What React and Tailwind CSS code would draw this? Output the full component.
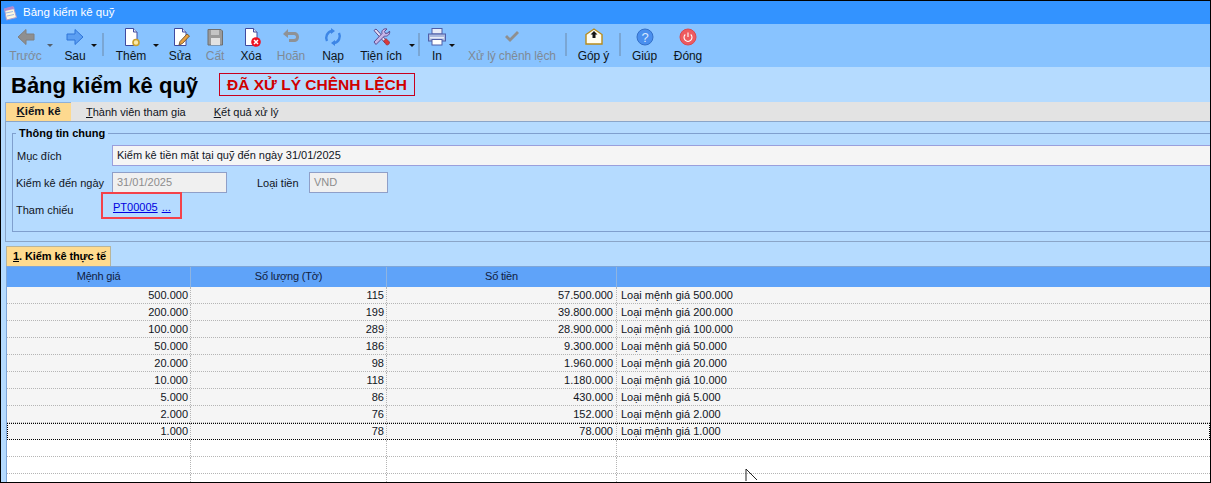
import React from 'react';

const rows = [
  ['500.000', '115', '57.500.000', 'Loại mệnh giá 500.000'],
  ['200.000', '199', '39.800.000', 'Loại mệnh giá 200.000'],
  ['100.000', '289', '28.900.000', 'Loại mệnh giá 100.000'],
  ['50.000', '186', '9.300.000', 'Loại mệnh giá 50.000'],
  ['20.000', '98', '1.960.000', 'Loại mệnh giá 20.000'],
  ['10.000', '118', '1.180.000', 'Loại mệnh giá 10.000'],
  ['5.000', '86', '430.000', 'Loại mệnh giá 5.000'],
  ['2.000', '76', '152.000', 'Loại mệnh giá 2.000'],
  ['1.000', '78', '78.000', 'Loại mệnh giá 1.000'],
];

const Page = ({ children }) => (
  <>
    <path d="M4.500 1.500h8l3.500 3.500v13.500h-11.500z" fill="#fff" stroke="#3f4aa0" />
    <path d="M12.500 1.500v3.500h3.500" fill="#dfe6f5" stroke="#3f4aa0" />
    {children}
  </>
);

const icons = {
  back: <path d="M2 10l8-7.500v4.500h8v6h-8v4.500z" fill="#8f8f8f" stroke="#808080" />,
  forward: <path d="M18 10l-8-7.500v4.500H2v6h8v4.500z" fill="#5c9ff2" stroke="#2f74d8" />,
  add: <Page><circle cx="15" cy="15.500" r="3" fill="#fbe9a8" stroke="#c9a02c" strokeWidth="1.600" /></Page>,
  edit: <Page><path d="M9 18l1-3.500 7-7.500 2.500 2-7 7.500z" fill="#e9a13f" stroke="#7a5c36" /></Page>,
  save: (
    <>
      <path d="M3 2.500h13l1.500 1.500v14H3z" fill="#9a9a9a" stroke="#6f6f6f" />
      <rect x="6" y="3" width="8" height="5" fill="#c4c4c4" />
      <rect x="6" y="11" width="9" height="7" fill="#e2e2e2" />
    </>
  ),
  del: (
    <Page>
      <circle cx="15" cy="15" r="4.800" fill="#ee1122" />
      <path d="M13 13l4 4m0-4l-4 4" stroke="#fff" strokeWidth="1.500" />
    </Page>
  ),
  undo: <path d="M2 7l5-5v3h6c3 0 5 2 5 5s-2 5-5 5H8v-3h5c1.500 0 2-1 2-2s-.5-2-2-2H7v3z" fill="#8f9296" />,
  reload: (
    <g fill="none" stroke="#3d86e6" strokeWidth="2.400">
      <path d="M4 14c-2-4 0-9 5-10" />
      <path d="M16 6c2 4 0 9-5 10" />
      <path d="M8 1v6l4-3zM12 13v6l-4-3z" fill="#3d86e6" stroke="none" />
    </g>
  ),
  tools: (
    <>
      <path d="M3 3.500l2-1.500 11 12-2 2z" fill="#e8e2f6" stroke="#5c4a90" />
      <path d="M3 15l8-8.500c-1-3 2-5.500 5-4.500l-2.500 2.500 1 2 2.500-.5 1.500-2c1 3-2 6-5 5L5 17.500z" fill="#c6b6e8" stroke="#5c4a90" />
      <path d="M12.500 14l2.500-2.500 3.500 3.500c.5 1.500-1.500 3.500-3 3z" fill="#d83a3a" stroke="#8a2a3a" strokeWidth=".6" />
    </>
  ),
  print: (
    <>
      <rect x="5" y="1.500" width="10" height="5.500" fill="#e8ecf8" stroke="#4f5ea8" />
      <rect x="1.500" y="7" width="17" height="7" fill="#a9b8de" stroke="#4f5ea8" />
      <rect x="3" y="10" width="14" height="1.500" fill="#e8ecf8" />
      <rect x="5" y="12.500" width="10" height="5.500" fill="#fff" stroke="#4f5ea8" />
    </>
  ),
  check: <path d="M3 10l2-2 3 3 7-7 2 2-9 9z" fill="#8f8f8f" />,
  feedback: (
    <>
      <path d="M2 7.500l8-5.500 8 5.500v9.500H2z" fill="#fffdf2" stroke="#b88c1c" strokeWidth="1.400" />
      <path d="M10 4l3.500 3.500h-2v3.500h-3V7.500h-2z" fill="#151515" />
    </>
  ),
  help: (
    <>
      <circle cx="10" cy="10" r="8" fill="#4a8fee" stroke="#3470c8" />
      <text x="10" y="14.500" textAnchor="middle" fontSize="13" fill="#d8e8ff" fontFamily="'Liberation Sans', sans-serif">?</text>
    </>
  ),
  power: (
    <>
      <circle cx="10" cy="10" r="8" fill="#ee5a5f" stroke="#d94a50" />
      <path d="M7.300 7.500a4 4 0 1 0 5.400 0M10 5.500v4.500" fill="none" stroke="#fff" strokeWidth="1.100" />
    </>
  ),
};

const tools = [
  { w: 49, label: 'Trước', icon: 'back', off: true, caret: 46, caretColor: 'border-t-[#55606c]' },
  { w: 50, label: 'Sau', icon: 'forward', caret: 41 },
  { sep: true, w: 5 },
  { w: 52, label: 'Thêm', icon: 'add', caret: 48 },
  { w: 46, label: 'Sửa', icon: 'edit' },
  { w: 24, label: 'Cất', icon: 'save', off: true },
  { w: 48, label: 'Xóa', icon: 'del' },
  { w: 32, label: 'Hoãn', icon: 'undo', off: true },
  { w: 52, label: 'Nạp', icon: 'reload' },
  { w: 44, label: 'Tiện ích', icon: 'tools', caret: 50 },
  { gap: true, w: 14 },
  { sep: true, w: 4 },
  { w: 32, label: 'In', icon: 'print', caret: 28 },
  { gap: true, w: 13 },
  { w: 92, label: 'Xử lý chênh lệch', icon: 'check', off: true },
  { gap: true, w: 6 },
  { sep: true, w: 4 },
  { gap: true, w: 1 },
  { w: 49, label: 'Góp ý', icon: 'feedback' },
  { sep: true, w: 4 },
  { w: 45, label: 'Giúp', icon: 'help' },
  { w: 42, label: 'Đóng', icon: 'power' },
];

const ToolItem = ({ item }) => {
  if (item.gap) return <div style={{ width: item.w }} />;
  if (item.sep) {
    return (
      <div className="flex justify-center items-start pt-[9px]" style={{ width: item.w }}>
        <div className="w-[2px] h-[23px] bg-[#7aa6d4]" />
      </div>
    );
  }
  return (
    <div className="relative flex flex-col items-center shrink-0" style={{ width: item.w }}>
      <svg width="20" height="20" viewBox="0 0 20 20" className="mt-[3px]">
        {icons[item.icon]}
      </svg>
      <span className={`mt-[2px] text-[12px] leading-[15px] tracking-[-0.1px] whitespace-nowrap ${item.off ? 'text-[#7f8a96]' : 'text-[#0d1520]'}`}>
        {item.label}
      </span>
      {item.caret && (
        <span
          className={`absolute top-[20px] w-0 h-0 border-x-[3px] border-x-transparent border-t-[3px] ${item.caretColor || 'border-t-[#111]'}`}
          style={{ left: item.caret }}
        />
      )}
    </div>
  );
};

export default function App() {
  return (
    <div className="w-[1211px] h-[483px] overflow-hidden flex flex-col bg-[#b5dbff] border-x border-t border-b border-black text-[11px] text-[#10141c] font-['Liberation_Sans',sans-serif]">
      <div className="h-[23px] shrink-0 bg-[#3393ff] flex items-center pl-[2px] gap-[6px] text-white">
        <svg width="14" height="16" viewBox="0 0 14 16">
          <path d="M1.500 4l9-2 3 10.500-10 2.500z" fill="#fbf6e0" stroke="#a79ad0" />
          <path d="M1 3.500l9-2.500 1 3-9 2z" fill="#b08ad0" />
          <path d="M3 8l7-1.500M4 11l7-1.500" stroke="#9fb8e0" />
        </svg>
        <span className="text-[11.500px]">Bảng kiểm kê quỹ</span>
      </div>

      <div className="h-[43px] shrink-0 bg-[#88c3ff] flex">
        {tools.map((item, i) => (
          <ToolItem key={i} item={item} />
        ))}
      </div>

      <div className="h-[35px] shrink-0 flex items-center pl-[10px]">
        <h1 className="text-[22px] leading-none font-bold text-black w-[208px] pt-[2px]">Bảng kiểm kê quỹ</h1>
        <div className="w-[196px] h-[23px] border border-[#c8001e] flex items-center justify-center text-[15.500px] font-bold text-[#d00000] whitespace-nowrap">
          ĐÃ XỬ LÝ CHÊNH LỆCH
        </div>
      </div>

      <div className="h-[20px] shrink-0 ml-[4px] bg-[#e3e3e3] border-b border-[#8aa5c8] flex">
        <div className="w-[66px] bg-[#fdd98f] border-l border-t border-[#8fb0d8] flex items-center justify-center font-bold text-[11.500px]">
          <span><u>K</u>iểm kê</span>
        </div>
        <div className="ml-[15px] pt-[1px] flex items-center"><span><u>T</u>hành viên tham gia</span></div>
        <div className="ml-[28px] pt-[1px] flex items-center"><span><u>K</u>ết quả xử lý</span></div>
      </div>

      <div className="h-[120px] shrink-0 ml-[4px] border-l border-b border-[#8aa5c8] pl-[6px] pt-[5px]">
        <fieldset className="h-[105px] border-l border-t border-b border-[#7f9fce] pl-[4px]">
          <legend className="-ml-[1px] px-[3px] font-bold text-[11px] leading-[13px] text-black">Thông tin chung</legend>
          <div className="flex items-center h-[21px] mt-[5px]">
            <span className="w-[95px] pt-[1px]">Mục đích</span>
            <div className="flex-1 h-[21px] bg-[#f5f5f5] border-y border-l border-[#9a9fdc] pl-[4px] flex items-center">
              Kiểm kê tiền mặt tại quỹ đến ngày 31/01/2025
            </div>
          </div>
          <div className="flex items-center h-[21px] mt-[6px]">
            <span className="w-[96px] -ml-[1px] pt-[1px] whitespace-nowrap">Kiểm kê đến ngày</span>
            <div className="w-[115px] h-[21px] bg-[#f0f0f0] border border-[#8f9fc8] pl-[4px] flex items-center text-[#8d8d8d]">31/01/2025</div>
            <span className="ml-[30px] w-[52px] pt-[1px] whitespace-nowrap">Loại tiền</span>
            <div className="w-[79px] h-[21px] bg-[#f0f0f0] border border-[#8f9fc8] pl-[4px] flex items-center text-[#8d8d8d]">VND</div>
          </div>
          <div className="flex items-center h-[27px] -mt-[1px]">
            <span className="w-[85px] -ml-[1px] pt-[9px]">Tham chiếu</span>
            <div className="w-[81px] h-[27px] border-2 border-[#f4424a] pl-[10px] pt-[4px] flex items-center gap-[4px] text-[#0000e0] underline">
              <span>PT00005</span>
              <span>...</span>
            </div>
          </div>
        </fieldset>
      </div>

      <div className="flex-1 min-h-0 overflow-hidden relative flex flex-col pl-[5px] pt-[4px]">
        <div className="w-[105px] h-[20px] shrink-0 bg-[#ffdb8f] border border-[#b9b59a] border-b-0 flex items-center pl-[6px] font-bold text-[11px] tracking-[-0.1px] text-black whitespace-nowrap">
          <span><u>1</u>. Kiểm kê thực tế</span>
        </div>
        <div className="flex h-[21px] bg-[#5fa3f9] text-[#102040] tracking-[-0.2px] border-t border-l border-[#7fa6d8] shrink-0">
          <div className="w-[184px] text-center leading-[19px] border-r border-[#8fb4e0]">Mệnh giá</div>
          <div className="w-[196px] text-center leading-[19px] border-r border-[#8fb4e0]">Số lượng (Tờ)</div>
          <div className="w-[230px] text-center leading-[19px] border-r border-[#8fb4e0]">Số tiền</div>
        </div>
        <div className="flex-1 min-h-0 bg-white border-l border-[#7fa6d8]">
          {rows.map((r, i) => {
            const selected = i === rows.length - 1;
            return (
              <div
                key={r[0]}
                className={`flex h-[17px] leading-[16px] bg-[#f5f5f5] border-b border-dotted ${selected ? 'border-black outline-1 outline-dotted outline-black -outline-offset-1' : 'border-[#b5b5b5]'}`}
              >
                <div className="w-[184px] text-right pr-[2px] border-r border-dotted border-[#b5b5b5]">{r[0]}</div>
                <div className="w-[196px] text-right pr-[2px] border-r border-dotted border-[#b5b5b5]">{r[1]}</div>
                <div className="w-[230px] text-right pr-[3px] border-r border-dotted border-[#b5b5b5]">{r[2]}</div>
                <div className="pl-[4px]">{r[3]}</div>
              </div>
            );
          })}
          {[0, 1, 2].map((i) => (
            <div key={i} className="flex h-[17px] bg-white border-b border-dotted border-[#b5b5b5]">
              <div className="w-[184px] border-r border-dotted border-[#b5b5b5]" />
              <div className="w-[196px] border-r border-dotted border-[#b5b5b5]" />
              <div className="w-[230px] border-r border-dotted border-[#b5b5b5]" />
            </div>
          ))}
        </div>
        <svg width="14" height="14" viewBox="0 0 14 14" className="absolute left-[744px] bottom-0">
          <path d="M1 1v12M1 1l11 11" fill="none" stroke="#222" />
        </svg>
      </div>
    </div>
  );
}
